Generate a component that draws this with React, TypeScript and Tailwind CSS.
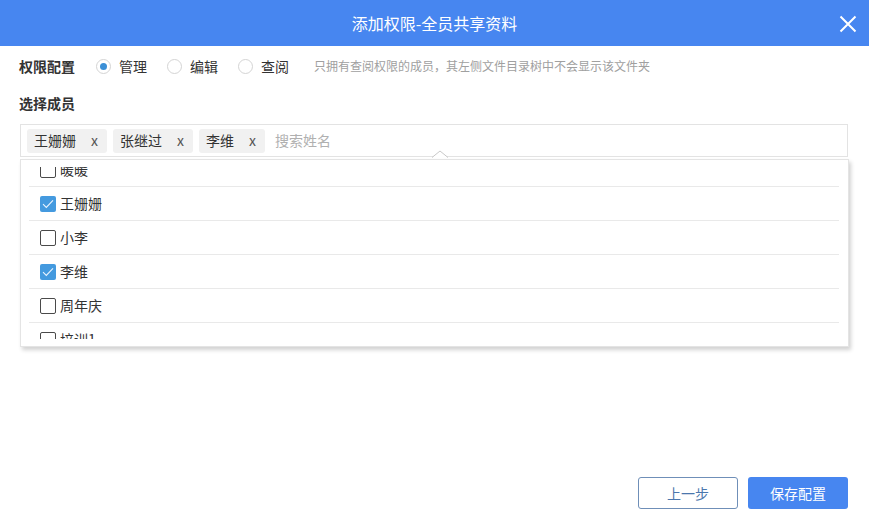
import { FC } from "react";

const font = "font-['Microsoft_YaHei','Noto_Sans_CJK_SC',sans-serif]";

interface Member {
  name: string;
  checked: boolean;
}

const members: Member[] = [
  { name: "暖暖", checked: false },
  { name: "王姗姗", checked: true },
  { name: "小李", checked: false },
  { name: "李维", checked: true },
  { name: "周年庆", checked: false },
  { name: "培训1", checked: false },
];

const tags = ["王姗姗", "张继过", "李维"];

const Radio: FC<{ label: string; checked?: boolean }> = ({ label, checked }) => (
  <label className="flex items-center gap-[8px] text-[14px] text-[#333]">
    <span className="w-[15px] h-[15px] rounded-full border border-[#d4d4d4] bg-white flex items-center justify-center">
      {checked && <span className="w-[7px] h-[7px] rounded-full bg-[#3b8fd6]" />}
    </span>
    {label}
  </label>
);

const Checkbox: FC<{ checked: boolean }> = ({ checked }) =>
  checked ? (
    <span className="w-[16px] h-[16px] rounded-[2px] bg-[#449adf] flex items-center justify-center">
      <svg width="12" height="10" viewBox="0 0 12 10" fill="none">
        <path d="M1 5.2 L4.3 8.4 L11 1.3" stroke="#eaf4ff" strokeWidth="1.1" />
      </svg>
    </span>
  ) : (
    <span className="w-[16px] h-[16px] rounded-[2px] border-[1.5px] border-[#4a4a4a] bg-white" />
  );

export default function App() {
  return (
    <div className={`w-[869px] h-[524px] bg-white flex flex-col ${font}`}>
      {/* header */}
      <div className="relative h-[46px] bg-[#4786f0] flex items-center justify-center">
        <span className="text-[16px] text-white">添加权限-全员共享资料</span>
        <button className="absolute right-[12px] top-[15px] w-[18px] h-[18px]">
          <svg width="18" height="18" viewBox="0 0 18 18">
            <path d="M1.5 1.5 L16.5 16.5 M16.5 1.5 L1.5 16.5" stroke="#fff" strokeWidth="2" />
          </svg>
        </button>
      </div>

      {/* body */}
      <div className="flex-1 flex flex-col px-[20px] pr-[21px]">
        <div className="mt-[10px] h-[20px] flex items-center">
          <span className="text-[14px] font-bold text-[#333] w-[76px] -ml-[1px]">权限配置</span>
          <div className="flex items-center gap-[20px] ml-[1px]">
            <Radio label="管理" checked />
            <Radio label="编辑" />
            <Radio label="查阅" />
          </div>
          <span className="ml-[25px] text-[12px] text-[#a0a0a0]">
            只拥有查阅权限的成员，其左侧文件目录树中不会显示该文件夹
          </span>
        </div>

        <div className="mt-[17px] h-[20px] flex items-center text-[14px] font-bold text-[#333] -ml-[1px]">
          选择成员
        </div>

        {/* input with tags */}
        <div className="relative mt-[11px] h-[33px] border border-[#e3e3e3] flex items-center gap-[6px] px-[6px]">
          {tags.map((t) => (
            <span
              key={t}
              className="h-[24px] flex items-center gap-[15px] pl-[7px] pr-[9px] rounded-[3px] bg-[#f1f1f1] text-[14px] text-[#333]"
            >
              {t}
              <span className="text-[14px] text-[#555]">x</span>
            </span>
          ))}
          <span className="ml-[4px] text-[14px] text-[#b0b0b0]">搜索姓名</span>
          <svg className="absolute left-[411px] -bottom-[2px]" width="16" height="8" viewBox="0 0 16 8">
            <path d="M0 7.5 L8 1 L16 7.5" fill="#fff" stroke="#c8c8c8" strokeWidth="1" />
          </svg>
        </div>

        {/* dropdown */}
        <div className="mt-[2px] -mr-[1px] h-[188px] border border-[#e4e4e4] bg-white shadow-[2px_3px_4px_rgba(0,0,0,0.18)] py-[7px]">
          <div className="h-[172px] overflow-hidden">
            <div className="-mt-[14px] mx-[8px] mr-[9px]">
              {members.map((m) => (
                <div
                  key={m.name}
                  className="h-[34px] flex items-center gap-[4px] pl-[11px] border-b border-[#e9e9e9] text-[14px] text-[#333]"
                >
                  <Checkbox checked={m.checked} />
                  {m.name}
                </div>
              ))}
            </div>
          </div>
        </div>

        <div className="flex-1" />

        {/* footer */}
        <div className="flex justify-end gap-[10px] pb-[15px]">
          <button className="w-[100px] h-[32px] rounded-[3px] border border-[#6f8fb8] text-[14px] text-[#4b77ad] bg-white">
            上一步
          </button>
          <button className="w-[100px] h-[32px] rounded-[3px] bg-[#4786f0] text-[14px] text-white">
            保存配置
          </button>
        </div>
      </div>
    </div>
  );
}
